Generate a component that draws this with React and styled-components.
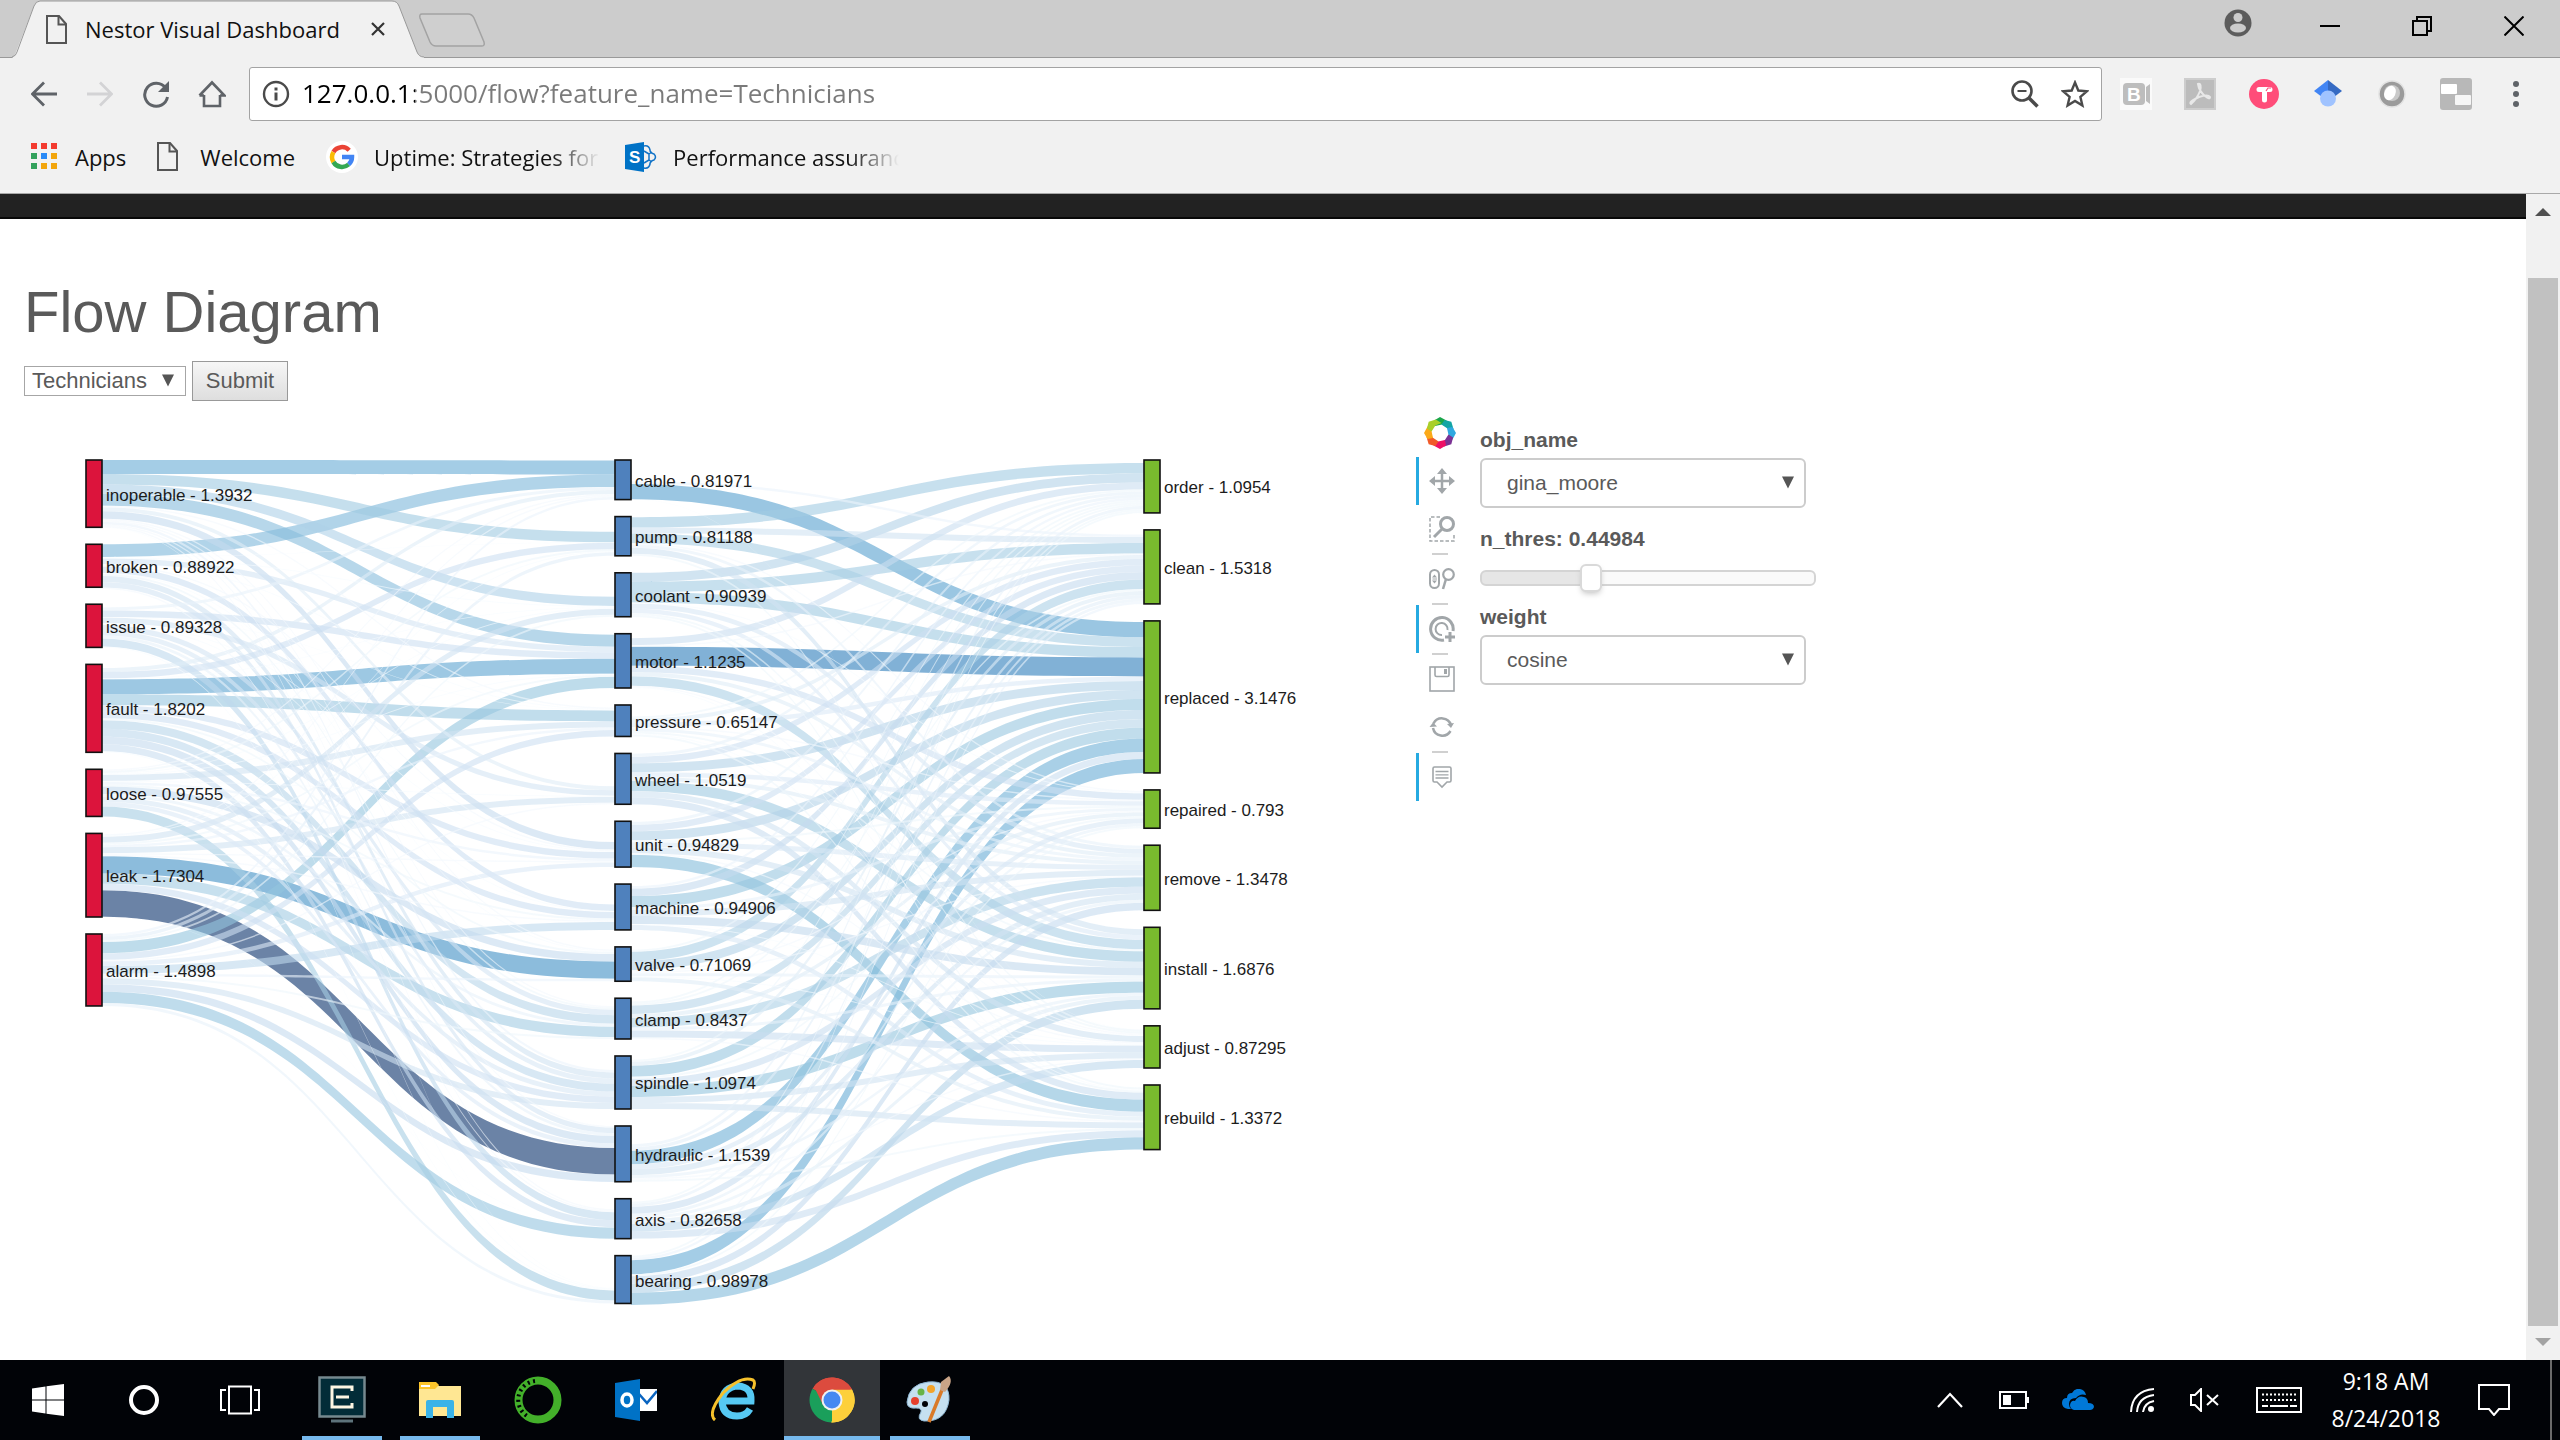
import React, { useState } from "react";
import styled, { createGlobalStyle, css } from "styled-components";

const UI = `"Open Sans", "Noto Sans", sans-serif`;
const ARIAL = `"Liberation Sans", Arial, sans-serif`;

const GlobalStyle = createGlobalStyle`
  *, *::before, *::after { box-sizing: border-box; }
  html, body, #root { height: 100%; }
  body { margin: 0; background: #fff; font-family: ${ARIAL}; }
  button { border: 0; padding: 0; background: none; color: inherit; font: inherit; }
  svg { display: block; flex: none; }
`;

/* ---------- frame ---------- */

const Screen = styled.div`
  display: flex;
  flex-direction: column;
  height: 100vh;
  overflow: hidden;
`;

const TabStrip = styled.header`
  display: flex;
  justify-content: space-between;
  height: 58px;
  padding-left: 12px;
  background: #ccc;
  box-shadow: inset 0 -1px #999;
`;

const Tabs = styled.div`
  display: flex;
`;

const Tab = styled.div`
  position: relative;
  display: flex;
  align-items: center;
  width: 412px;
  height: 58px;
  padding: 0 36px 0 34px;
`;

const TabShape = styled.svg`
  position: absolute;
  inset: 0;
`;

const TabTitle = styled.span`
  position: relative;
  flex: 1;
  margin-left: 18px;
  color: #111;
  font: 22px/32px ${UI};
  white-space: nowrap;
`;

const Layer = styled.span`
  position: relative;
  display: flex;
`;

const TabClose = styled.button`
  position: relative;
  display: grid;
  place-items: center;
  width: 20px;
  height: 20px;
`;

const NewTab = styled.button`
  display: flex;
  align-items: flex-start;
  margin-left: -6px;
  padding-top: 13px;
`;

const WindowButtons = styled.div`
  display: flex;
  height: 52px;
`;

const WindowButton = styled.button`
  display: grid;
  place-items: center;
  width: 92px;
`;

const ToolbarRow = styled.nav`
  display: flex;
  align-items: center;
  height: 72px;
  padding: 0 24px 0 16px;
  background: #f1f1f1;
`;

const NavButton = styled.button`
  display: grid;
  place-items: center;
  width: 56px;
  height: 44px;
`;

const AddressBar = styled.div`
  flex: 1;
  display: flex;
  align-items: center;
  gap: 22px;
  height: 54px;
  margin: 0 18px 0 9px;
  padding: 0 12px;
  border: 1px solid #a3a3a3;
  border-radius: 3px;
  background: #fff;
`;

const Address = styled.input`
  flex: 1;
  min-width: 0;
  height: 44px;
  margin-left: -10px;
  padding: 0 0 2px;
  border: 0;
  outline: 0;
  font: 26px/42px ${UI};
  -webkit-text-fill-color: transparent;
  background: linear-gradient(90deg, #000 113px, #7a7a7a 113px);
  background-clip: text;
  -webkit-background-clip: text;
`;

const Extensions = styled.div`
  display: flex;
  gap: 32px;
`;

const IconButton = styled.button`
  display: grid;
  place-items: center;
  width: ${(p) => p.$size || 32}px;
  height: 32px;
`;

const Bookmarks = styled.nav`
  display: flex;
  align-items: center;
  height: 64px;
  padding: 0 31px 10px;
  gap: 31px;
  background: #f1f1f1;
  border-bottom: 1px solid #a9a9a9;
`;

const Bookmark = styled.a`
  display: flex;
  align-items: center;
  gap: ${(p) => p.$gap || 18}px;
  color: #111;
  font: 22px/34px ${UI};
  text-decoration: none;
  white-space: nowrap;
`;

const FadeBox = styled.span`
  width: 220px;
`;

const FadeText = styled.span`
  display: block;
  width: max-content;
  mask-image: linear-gradient(90deg, #000 176px, transparent 226px);
`;

/* ---------- page ---------- */

const Viewport = styled.div`
  flex: 1;
  min-height: 0;
  display: flex;
`;

const Page = styled.main`
  flex: 1;
  min-width: 0;
  overflow: hidden;
  color: #5a5a5a;
`;

const DarkBar = styled.div`
  height: 25px;
  background: #222;
  border-bottom: 2px solid #080808;
`;

const Heading = styled.h1`
  margin: 60px 24px 16px;
  font: 400 58px/66px ${ARIAL};
`;

const FeatureForm = styled.form`
  display: flex;
  align-items: center;
  gap: 6px;
  height: 40px;
  margin: 0 24px;
`;

const SelectBox = styled.div`
  position: relative;
  width: ${(p) => p.$width}px;
`;

const Arrow = styled.svg`
  position: absolute;
  right: 12px;
  top: 50%;
  margin-top: -7px;
  pointer-events: none;
`;

const SmallSelect = styled.select`
  display: block;
  appearance: none;
  width: 100%;
  height: 30px;
  padding: 0 7px;
  border: 1px solid #a6a6a6;
  border-radius: 0;
  background: #fff;
  color: #5a5a5a;
  font: 22px/28px ${ARIAL};
`;

const Submit = styled.button`
  width: 96px;
  height: 40px;
  border: 1px solid #999;
  background: linear-gradient(#f6f6f6, #dedede);
  font-size: 22px;
`;

const Plot = styled.section`
  display: flex;
  align-items: flex-start;
  padding-top: 15px;
`;

const ToolColumn = styled.div`
  display: flex;
  flex-direction: column;
  width: 42px;
  margin-left: 16px;
`;

const ToolLogo = styled.a`
  display: flex;
  margin: 1px 0 8px 8px;
`;

const Tool = styled.button`
  display: grid;
  place-items: center;
  height: 48px;
  padding-left: 6px;
  border-left: 3px solid ${(p) => (p.$active ? "#26aae1" : "transparent")};
`;

const ToolGap = styled.hr`
  width: 16px;
  height: 2px;
  margin: 0 0 0 16px;
  border: 0;
  background: #d0d0d0;
`;

const Widgets = styled.form`
  display: flex;
  flex-direction: column;
  width: 336px;
  margin-left: 22px;
  padding-top: 11px;
`;

const WidgetBlock = styled.div`
  display: flex;
  flex-direction: column;
  gap: ${(p) => p.$gap}px;
  margin-bottom: ${(p) => p.$after}px;
`;

const WidgetLabel = styled.label`
  font: 700 21px/26px ${ARIAL};
`;

const WideSelect = styled.select`
  display: block;
  appearance: none;
  width: 100%;
  height: 50px;
  padding: 0 25px;
  border: 2px solid #ccc;
  border-radius: 6px;
  background: #fff;
  color: #5a5a5a;
  font: 21px/44px ${ARIAL};
`;

const Slider = styled.input`
  appearance: none;
  width: 100%;
  height: 28px;
  margin: 0;
  background: transparent;
  &::-webkit-slider-runnable-track {
    height: 16px;
    border: 2px solid #d4d4d4;
    border-radius: 6px;
    background: linear-gradient(90deg, #e6e6e6 33%, #fafafa 33%);
  }
  &::-webkit-slider-thumb {
    appearance: none;
    width: 22px;
    height: 28px;
    margin-top: -8px;
    border: 2px solid #d9d9d9;
    border-radius: 6px;
    background: #fff;
    box-shadow: 0 3px 6px -2px #bbb;
  }
`;

const ScrollTrack = styled.div`
  display: flex;
  flex-direction: column;
  align-items: center;
  width: 34px;
  padding: 14px 0;
  background: #f1f1f1;
`;

const ScrollThumb = styled.div`
  flex: 1;
  width: 30px;
  margin: 62px 0 12px;
  background: #c1c1c1;
`;

/* ---------- taskbar ---------- */

const Taskbar = styled.footer`
  display: flex;
  justify-content: space-between;
  height: 80px;
  background: #010307;
  color: #fff;
`;

const TaskGroup = styled.div`
  display: flex;
  gap: ${(p) => p.$gap || 0}px;
  margin-left: ${(p) => (p.$gap ? 6 : 0)}px;
`;

const TaskButton = styled.button`
  position: relative;
  display: grid;
  place-items: center;
  width: 96px;
  height: 80px;
  background: ${(p) => (p.$active ? "#323539" : "transparent")};
  ${(p) =>
    p.$open &&
    css`
      &::after {
        content: "";
        position: absolute;
        bottom: 0;
        left: ${p.$active ? 0 : 8}px;
        right: ${p.$active ? 0 : 8}px;
        height: 4px;
        background: #76b9ed;
      }
    `}
`;

const Tray = styled.div`
  display: flex;
  align-items: center;
  padding-right: 8px;
`;

const TrayButton = styled.button`
  display: grid;
  place-items: center;
  width: ${(p) => p.$w || 64}px;
  height: 80px;
`;

const Clock = styled.time`
  width: 124px;
  font: 23px/37px ${UI};
  text-align: center;
`;

const ShowDesktop = styled.button`
  width: 2px;
  height: 80px;
  margin-left: 10px;
  background: #6a6a6a;
`;

/* ---------- flow diagram ---------- */

const K = 48.3;
const PAD = 17;
const TOP = 44;
const NODE_W = 16;

const columns = [
  {
    x: 86,
    color: "#dc143c",
    nodes: [["inoperable", 1.3932], ["broken", 0.88922], ["issue", 0.89328], ["fault", 1.8202], ["loose", 0.97555], ["leak", 1.7304], ["alarm", 1.4898]],
  },
  {
    x: 615,
    color: "#4f81bd",
    nodes: [["cable", 0.81971], ["pump", 0.81188], ["coolant", 0.90939], ["motor", 1.1235], ["pressure", 0.65147], ["wheel", 1.0519], ["unit", 0.94829], ["machine", 0.94906], ["valve", 0.71069], ["clamp", 0.8437], ["spindle", 1.0974], ["hydraulic", 1.1539], ["axis", 0.82658], ["bearing", 0.98978]],
  },
  {
    x: 1144,
    color: "#79bb2e",
    nodes: [["order", 1.0954], ["clean", 1.5318], ["replaced", 3.1476], ["repaired", 0.793], ["remove", 1.3478], ["install", 1.6876], ["adjust", 0.87295], ["rebuild", 1.3372]],
  },
];

/* problem -> item, one row for each problem */
const problemItem = [
  [14, 10.5, 9.3, 12, 1.5, 4, 7.5, 0, 1.5, 1.5, 2.5, 1.5, 1.5, 0.5],
  [12.6, 0.5, 1, 5.5, 1, 0, 1.5, 6.5, 1, 2, 6, 5.5, 1.5, 0],
  [3, 0, 0, 6.5, 0.5, 5.5, 1, 1, 0, 5.5, 5, 3, 8, 1],
  [4, 6.5, 0.8, 15, 11, 0, 6.5, 6.5, 2, 8.5, 8, 7.5, 7, 1],
  [1.5, 2, 1, 1, 6, 1, 2.5, 2, 7.5, 3, 5, 4.5, 0, 10],
  [1.5, 1, 6, 2, 2.5, 6, 1.5, 1.5, 17.2, 10.3, 6.5, 26.5, 0.3, 0],
  [2.5, 3.5, 2, 11.3, 6.5, 1.5, 4.5, 8, 2.5, 2, 6, 7.5, 11.2, 3],
];

/* item -> solution, one row for each item */
const itemSolution = [
  [0, 2.5, 15.3, 0, 0, 0, 0.3, 0],
  [10.3, 6, 9.7, 1.5, 3, 6, 2, 0],
  [9, 10.3, 10.5, 1, 5, 4.5, 2, 2],
  [7, 1.5, 19, 6.5, 4, 9.5, 1.3, 1],
  [2, 4, 4.5, 1.5, 3, 2, 1, 2],
  [3, 6.5, 9, 4.5, 4, 10.5, 6, 7],
  [3, 6.5, 9, 2, 5, 6, 1.5, 12.2],
  [2.5, 7.5, 11, 3, 6, 7.8, 1, 5],
  [2, 9.5, 9, 1.5, 1.5, 3, 1, 4],
  [2, 2, 8.5, 4, 9.5, 3, 7, 1.5],
  [2, 4, 11, 2, 7, 11.3, 6, 6],
  [3, 3.5, 13.5, 5, 6, 3, 1.5, 2],
  [2, 3, 7, 3, 3, 4, 8, 7],
  [2, 2.5, 14, 2, 7.5, 9, 0, 12.3],
];

const blues = [[247, 251, 255], [222, 235, 247], [198, 219, 239], [158, 202, 225], [107, 174, 214], [66, 146, 198], [33, 113, 181], [8, 81, 156], [8, 48, 107]];

function blue(t) {
  const p = Math.min(0.9999, Math.max(0, t)) * (blues.length - 1);
  const i = Math.floor(p);
  const mix = blues[i].map((c, n) => Math.round(c + (blues[i + 1][n] - c) * (p - i)));
  return `rgb(${mix.join(",")})`;
}

const placed = columns.map((col) => {
  let y = TOP;
  return col.nodes.map(([name, value]) => {
    const node = { name, value, y, h: value * K };
    y += node.h + PAD;
    return node;
  });
});

function buildLinks(table, from, to, x0, x1) {
  const total = (list) => list.reduce((a, b) => a + b, 0);
  const outY = from.map((n, i) => n.y + n.h - Math.min(n.h, total(table[i])));
  const inY = to.map((n, j) => n.y + n.h - Math.min(n.h, total(table.map((r) => r[j]))));
  const links = [];
  table.forEach((row, i) =>
    row.forEach((w, j) => {
      if (!w) return;
      links.push({ w, x0, x1, y0: outY[i], y1: inY[j], key: from[i].name + to[j].name });
      outY[i] += w;
      inY[j] += w;
    })
  );
  return links;
}

const links = [
  ...buildLinks(problemItem, placed[0], placed[1], columns[0].x + NODE_W, columns[1].x),
  ...buildLinks(itemSolution, placed[1], placed[2], columns[1].x + NODE_W, columns[2].x),
].sort((a, b) => b.w - a.w);

function band({ x0, x1, y0, y1, w }) {
  const m = (x0 + x1) / 2;
  return `M${x0} ${y0}C${m} ${y0} ${m} ${y1} ${x1} ${y1}V${y1 + w}C${m} ${y1 + w} ${m} ${y0 + w} ${x0} ${y0 + w}Z`;
}

const NodeLabel = styled.text`
  font: 17px ${ARIAL};
  fill: #1c1c1c;
`;

function FlowDiagram() {
  return (
    <svg width="1400" height="900" viewBox="0 0 1400 900" role="img" aria-label="Flow diagram">
      {links.map((l) => (
        <path key={l.key} d={band(l)} fill={blue((l.w - 1) / 25.5)} fillOpacity="0.6" />
      ))}
      {columns.map((col, c) =>
        placed[c].map((n) => (
          <g key={n.name}>
            <rect x={col.x} y={n.y} width={NODE_W} height={n.h} fill={col.color} stroke="#111" strokeWidth="1.6" />
            <NodeLabel x={col.x + 20} y={n.y + n.h / 2 + 7}>{`${n.name} - ${n.value}`}</NodeLabel>
          </g>
        ))
      )}
    </svg>
  );
}

/* ---------- icons ---------- */

const FileIcon = () => (
  <svg width="21" height="29" viewBox="0 0 21 29" fill="none" stroke="#555" strokeWidth="2">
    <path d="M1 1h12l7 8v19H1z" /><path d="M12.500 1v8.500H20" />
  </svg>
);

const Triangle = () => (
  <Arrow width="12" height="13" viewBox="0 0 12 13"><path d="M0 0.500h12L6 12.500z" fill="#555" /></Arrow>
);

const BackIcon = ({ flip }) => (
  <svg width="26" height="26" viewBox="0 0 26 26" fill="none" stroke={flip ? "#d3d3d5" : "#5f6368"} strokeWidth="2.800">
    <path d={flip ? "M0 13h24M13 1.500L24.500 13 13 24.500" : "M26 13H2M13 1.500L1.500 13 13 24.500"} />
  </svg>
);

const AppsIcon = () => (
  <svg width="26" height="27" viewBox="0 0 26 27">
    {["#f33b30", "#f33b30", "#f33b30", "#33a15c", "#2a8af6", "#f2a50c", "#33a15c", "#f2a50c", "#f2a50c"].map((c, i) => (
      <rect key={i} x={(i % 3) * 10} y={Math.floor(i / 3) * 10} width="6" height="6" fill={c} />
    ))}
  </svg>
);

const GoogleIcon = () => (
  <svg width="32" height="32" viewBox="0 0 32 32">
    <circle cx="16" cy="16" r="16" fill="#fff" />
    <g fill="none" strokeWidth="4.500">
      <path d="M23.200 9.200A10 10 0 0 0 7.400 11" stroke="#ea4335" />
      <path d="M7.400 11a10 10 0 0 0 0 10" stroke="#fbbc05" />
      <path d="M7.400 21a10 10 0 0 0 15.300 2.400" stroke="#34a853" />
      <path d="M22.700 23.400A10 10 0 0 0 26 16H16" stroke="#4285f4" />
    </g>
  </svg>
);

const SharePointIcon = () => (
  <svg width="32" height="30" viewBox="0 0 32 30">
    <g fill="none" stroke="#1173c7" strokeWidth="1.500"><path d="M19 4q5-1 6 4 0 3 4 4 3 3 0 6-4 1-4 4-1 5-6 4" /><path d="M19 9l5 3v6l-5 3M24 12l3-2M24 18l3 2" /></g>
    <path d="M0 3L19 0v30L0 27z" fill="#0072c6" />
    <text x="4" y="21" fill="#fff" fontFamily="Liberation Sans, sans-serif" fontWeight="700" fontSize="17">S</text>
  </svg>
);

const BokehLogo = () => {
  const colors = ["#1aa64b", "#12a5a5", "#2fa8e0", "#7b3294", "#ee1066", "#f15a29", "#fba919", "#a9cf2a"];
  return (
    <svg width="32" height="32" viewBox="-16 -16 32 32">
      {colors.map((c, i) => (
        <path key={c} d="M-6 -12.500L0 -16L6.500 -12.500L8 -6L2 -8.500L-5 -7Z" fill={c} transform={`rotate(${i * 45})`} />
      ))}
    </svg>
  );
};

const G = "#a1a6a9";
const ToolIcon = ({ children }) => <svg width="26" height="26" viewBox="0 0 26 26" fill="none" stroke={G} strokeWidth="2">{children}</svg>;

const PanIcon = () => (
  <ToolIcon>
    <path d="M13 3v20M3 13h20" strokeWidth="2.500" />
    <path d="M13 0l5 6H8zM13 26l5-6H8zM0 13l6-5v10zM26 13l-6-5v10z" fill={G} stroke="none" />
  </ToolIcon>
);
const BoxZoomIcon = () => (
  <ToolIcon>
    <path d="M11 1H1v24h24v-8" strokeDasharray="3.500 2" strokeWidth="1.500" />
    <circle cx="18" cy="8" r="6.500" strokeWidth="3" /><path d="M13 13l-8 8" strokeWidth="3" />
  </ToolIcon>
);
const WheelIcon = () => (
  <ToolIcon>
    <rect x="1" y="4" width="9" height="18" rx="4.500" /><path d="M3.500 13h4.500" strokeWidth="1" />
    <path d="M3 11.500l2.500-3 2.500 3zM3 14.500l2.500 3 2.500-3z" fill={G} stroke="none" />
    <circle cx="19.500" cy="8.500" r="5.300" strokeWidth="2.200" /><path d="M17 13l-3 10" strokeWidth="2.500" />
  </ToolIcon>
);
const TapIcon = () => (
  <ToolIcon>
    <path d="M24 15A11.300 11.300 0 1 0 15 24" strokeWidth="3" />
    <path d="M18.500 14A6 6 0 1 0 13 19" strokeWidth="2" />
    <path d="M21 16v10M16 21h10" strokeWidth="3" />
  </ToolIcon>
);
const SaveIcon = () => (
  <ToolIcon>
    <rect x="1" y="1" width="24" height="24" strokeWidth="1.600" /><path d="M6 1v8q0 1.500 1.500 1.500h11q1.500 0 1.500-1.500V1" strokeWidth="1.600" />
    <rect x="15" y="3" width="3" height="5" fill={G} stroke="none" />
  </ToolIcon>
);
const ResetIcon = () => (
  <ToolIcon>
    <path d="M4.500 9.500A9.500 9.500 0 0 1 22 11M21.500 17A9.500 9.500 0 0 1 4 14" strokeWidth="2.500" />
    <path d="M25 9l-3 5-4-4zM0.500 13L4 8.500l4 4z" fill={G} stroke="none" />
  </ToolIcon>
);
const HoverIcon = () => (
  <ToolIcon>
    <path d="M5.500 3h15q1.500 0 1.500 1.500v12q0 1.500-1.500 1.500H18l-5 5-5-5H5.500Q4 18 4 16.500v-12Q4 3 5.500 3z" strokeWidth="1.600" />
    <path d="M6.500 7.500h13M6.500 10.800h13M6.500 14h13" strokeWidth="1.300" />
  </ToolIcon>
);

const ChromeIcon = () => (
  <svg width="46" height="46" viewBox="-23 -23 46 46">
    <path d="M0 0L-19.500 -11.200A22.500 22.500 0 0 1 19.500 -11.200Z" fill="#dc4b3e" />
    <path d="M0 0L19.500 -11.200A22.500 22.500 0 0 1 0 22.500Z" fill="#fdd03b" />
    <path d="M0 0L0 22.500A22.500 22.500 0 0 1 -19.500 -11.200Z" fill="#1a9f5b" />
    <path d="M0 -10.500H20A22.500 22.500 0 0 1 -1 22.500L9 5Z" fill="#fdd03b" />
    <path d="M0 -10.500H20A22.500 22.500 0 0 0 -18 -13.500L-9 5Z" fill="#dc4b3e" />
    <circle r="10.500" fill="#f1f1f1" /><circle r="8.500" fill="#4688f1" />
  </svg>
);

/* ---------- app ---------- */

export default function App() {
  const [threshold, setThreshold] = useState(0.315);
  return (
    <Screen>
      <GlobalStyle />
      <TabStrip>
        <Tabs>
          <Tab>
            <TabShape width="412" height="58" viewBox="0 0 412 58">
              <path d="M0 58Q3 56 4 52L22 6Q24 1 28 1H380Q385 1 387 6L405 52Q407 57 412 57V58Z" fill="#f1f1f1" />
              <path d="M0 57Q4 56 5 52L22 6Q24 1 28 1H380Q385 1 387 6L405 52Q407 57 412 57" fill="none" stroke="#999" />
            </TabShape>
            <Layer><FileIcon /></Layer>
            <TabTitle>Nestor Visual Dashboard</TabTitle>
            <TabClose aria-label="Close tab">
              <svg width="14" height="14" viewBox="0 0 14 14" stroke="#333" strokeWidth="2.200"><path d="M1 1l12 12M13 1L1 13" /></svg>
            </TabClose>
          </Tab>
          <NewTab aria-label="New tab">
            <svg width="68" height="36" viewBox="0 0 68 36"><path d="M4 1H50Q54 1 56 5L66 29Q67 33 64 33H18Q14 33 12 29L2 5Q1 1 4 1Z" fill="#cfcfcf" stroke="#a3a3a3" strokeWidth="1.500" /></svg>
          </NewTab>
        </Tabs>
        <WindowButtons>
          <WindowButton aria-label="Profile">
            <svg width="28" height="46" viewBox="0 0 28 46"><circle cx="14" cy="20" r="13.500" fill="#5c5c5c" /><circle cx="14" cy="14.500" r="4.500" fill="#ccc" /><ellipse cx="14" cy="25" rx="8" ry="4.500" fill="#ccc" /></svg>
          </WindowButton>
          <WindowButton aria-label="Minimise"><svg width="20" height="20" viewBox="0 0 20 20"><path d="M0 10h20" stroke="#000" strokeWidth="2" /></svg></WindowButton>
          <WindowButton aria-label="Restore">
            <svg width="20" height="20" viewBox="0 0 20 20" fill="none" stroke="#000" strokeWidth="2"><path d="M1 5h14v14H1zM5 5V1h14v14h-4" /></svg>
          </WindowButton>
          <WindowButton aria-label="Close"><svg width="20" height="20" viewBox="0 0 20 20" stroke="#000" strokeWidth="2"><path d="M0.500 0.500l19 19M19.500 0.500l-19 19" /></svg></WindowButton>
        </WindowButtons>
      </TabStrip>

      <ToolbarRow>
        <NavButton aria-label="Back"><BackIcon /></NavButton>
        <NavButton aria-label="Forward"><BackIcon flip /></NavButton>
        <NavButton aria-label="Reload">
          <svg width="28" height="28" viewBox="0 0 28 28" fill="none" stroke="#5f6368" strokeWidth="3"><path d="M23.500 8A11.500 11.500 0 1 0 25.500 17" /><path d="M27 1v11H16z" fill="#5f6368" stroke="none" /></svg>
        </NavButton>
        <NavButton aria-label="Home">
          <svg width="28" height="28" viewBox="0 0 28 28" fill="none" stroke="#5f6368" strokeWidth="2.600"><path d="M6 15v11h16V15M1.500 15.500L14 2.500l12.500 13H22M6 15.500H1.500" /></svg>
        </NavButton>
        <AddressBar>
          <svg width="28" height="28" viewBox="0 0 28 28" fill="none" stroke="#4a4a4a" strokeWidth="2.400"><circle cx="14" cy="14" r="12" /><path d="M14 12.500v8" strokeWidth="3" /><path d="M14 7.500v3" strokeWidth="3" /></svg>
          <Address aria-label="Address" defaultValue="127.0.0.1:5000/flow?feature_name=Technicians" spellCheck={false} />
          <IconButton $size={28} aria-label="Zoom">
            <svg width="28" height="28" viewBox="0 0 28 28" fill="none" stroke="#4a4a4a" strokeWidth="2.600"><circle cx="11" cy="11" r="9.500" /><path d="M18 18l8.500 8.500" strokeWidth="3.600" /><path d="M6.500 11h9" strokeWidth="2" /></svg>
          </IconButton>
          <IconButton $size={28} aria-label="Bookmark this page">
            <svg width="28" height="28" viewBox="0 0 28 28" fill="none" stroke="#4a4a4a" strokeWidth="2.400"><path d="M14 2.500l3.300 8 8.700.700-6.600 5.700 2 8.600-7.400-4.600-7.400 4.600 2-8.600L2 11.200l8.700-.700z" /></svg>
          </IconButton>
        </AddressBar>
        <Extensions>
          <IconButton aria-label="Meeting extension">
            <svg width="32" height="32" viewBox="0 0 32 32"><path fill="#fafafa" d="M0 0h32v32H0z" /><rect x="3" y="5" width="22" height="22" rx="4" fill="#bdbdbd" /><path d="M26 9l4-3v20l-4-3z" fill="#bdbdbd" /><text x="7" y="23" fontSize="19" fontWeight="700" fill="#fff" fontFamily="Liberation Sans, sans-serif">B</text></svg>
          </IconButton>
          <IconButton aria-label="PDF extension">
            <svg width="32" height="32" viewBox="0 0 32 32"><rect x="1" y="1" width="30" height="30" fill="#bcbcbc" stroke="#cdcdcd" strokeWidth="2" /><path d="M14 6q4-1 2 7-3 8-9 13-3-2 8-7 9-3 11 0 0 3-5-1-6-5-7-12z" fill="none" stroke="#e8e8e8" strokeWidth="2" /></svg>
          </IconButton>
          <IconButton aria-label="Typing extension">
            <svg width="32" height="32" viewBox="0 0 32 32"><circle cx="16" cy="16" r="15" fill="#ff4d79" /><path d="M11 11.500h11M16.500 12v10" stroke="#fff" strokeWidth="5" strokeLinecap="round" /><path d="M18 13l2-3h3" stroke="#ff4d79" strokeWidth="1.200" fill="none" /></svg>
          </IconButton>
          <IconButton aria-label="Scholar extension">
            <svg width="32" height="32" viewBox="0 0 32 32"><path d="M16 2L2 13l8 6h6z" fill="#4285f4" /><path d="M16 2l14 11-8 6h-6z" fill="#356ac3" /><circle cx="16" cy="20.500" r="8" fill="#a0c3ff" /></svg>
          </IconButton>
          <IconButton aria-label="Ring extension">
            <svg width="32" height="32" viewBox="0 0 32 32"><circle cx="16" cy="16" r="13" fill="#9b9b9b" stroke="#e2e2e2" strokeWidth="1.500" /><circle cx="16" cy="15" r="8" fill="#c9c9c9" /><ellipse cx="14" cy="15" rx="5.500" ry="7.500" fill="#fff" transform="rotate(25 14 15)" /></svg>
          </IconButton>
          <IconButton aria-label="Window extension">
            <svg width="32" height="32" viewBox="0 0 32 32"><rect width="32" height="32" rx="3" fill="#b8b8b8" /><rect x="1" y="6" width="16" height="10" rx="1" fill="#fff" /><rect x="15" y="17" width="16" height="10" rx="1" fill="#f6f6f6" /></svg>
          </IconButton>
          <IconButton aria-label="Menu">
            <svg width="32" height="32" viewBox="0 0 32 32" fill="#5f6368"><circle cx="12" cy="6" r="3" /><circle cx="12" cy="16" r="3" /><circle cx="12" cy="26" r="3" /></svg>
          </IconButton>
        </Extensions>
      </ToolbarRow>

      <Bookmarks>
        <Bookmark href="#apps"><AppsIcon />Apps</Bookmark>
        <Bookmark href="#welcome" $gap={22}><FileIcon />Welcome</Bookmark>
        <Bookmark href="#uptime" $gap={16}><GoogleIcon /><FadeBox><FadeText>Uptime: Strategies for</FadeText></FadeBox></Bookmark>
        <Bookmark href="#assurance" $gap={16}><SharePointIcon /><FadeBox><FadeText>Performance assurance</FadeText></FadeBox></Bookmark>
      </Bookmarks>

      <Viewport>
        <Page>
          <DarkBar />
          <Heading>Flow Diagram</Heading>
          <FeatureForm onSubmit={(e) => e.preventDefault()}>
            <SelectBox $width={162}>
              <SmallSelect aria-label="Feature name" defaultValue="Technicians"><option>Technicians</option></SmallSelect>
              <Triangle />
            </SelectBox>
            <Submit type="submit">Submit</Submit>
          </FeatureForm>
          <Plot>
            <FlowDiagram />
            <ToolColumn>
              <ToolLogo href="#bokeh" aria-label="Bokeh"><BokehLogo /></ToolLogo>
              <Tool $active aria-label="Pan"><PanIcon /></Tool>
              <Tool aria-label="Box zoom"><BoxZoomIcon /></Tool>
              <ToolGap />
              <Tool aria-label="Wheel zoom"><WheelIcon /></Tool>
              <ToolGap />
              <Tool $active aria-label="Tap"><TapIcon /></Tool>
              <ToolGap />
              <Tool aria-label="Save"><SaveIcon /></Tool>
              <Tool aria-label="Reset"><ResetIcon /></Tool>
              <ToolGap />
              <Tool $active aria-label="Hover"><HoverIcon /></Tool>
            </ToolColumn>
            <Widgets>
              <WidgetBlock $gap={5} $after={18}>
                <WidgetLabel htmlFor="obj">obj_name</WidgetLabel>
                <SelectBox $width={326}>
                  <WideSelect id="obj" defaultValue="gina_moore"><option>gina_moore</option></WideSelect>
                  <Triangle />
                </SelectBox>
              </WidgetBlock>
              <WidgetBlock $gap={12} $after={12}>
                <WidgetLabel htmlFor="thres">n_thres: 0.44984</WidgetLabel>
                <Slider id="thres" type="range" min="0" max="1" step="0.001" value={threshold} onChange={(e) => setThreshold(+e.target.value)} />
              </WidgetBlock>
              <WidgetBlock $gap={5} $after={0}>
                <WidgetLabel htmlFor="weight">weight</WidgetLabel>
                <SelectBox $width={326}>
                  <WideSelect id="weight" defaultValue="cosine"><option>cosine</option></WideSelect>
                  <Triangle />
                </SelectBox>
              </WidgetBlock>
            </Widgets>
          </Plot>
        </Page>
        <ScrollTrack>
          <svg width="16" height="8" viewBox="0 0 16 8"><path d="M0 8L8 0l8 8z" fill="#505050" /></svg>
          <ScrollThumb />
          <svg width="16" height="8" viewBox="0 0 16 8"><path d="M0 0L8 8l8-8z" fill="#a3a3a3" /></svg>
        </ScrollTrack>
      </Viewport>

      <Taskbar>
        <TaskGroup>
          <TaskGroup>
            <TaskButton aria-label="Start"><svg width="32" height="32" viewBox="0 0 32 32" fill="#fff"><path d="M0 4.500l13.500-2V15.500H0zM14.500 2.300L32 0v15.500H14.500zM0 16.500h13.500v13L0 27.500zM14.500 16.500H32V32l-17.500-2.300z" /></svg></TaskButton>
            <TaskButton aria-label="Search"><svg width="32" height="32" viewBox="0 0 32 32"><circle cx="16" cy="16" r="13" fill="none" stroke="#fff" strokeWidth="4" /></svg></TaskButton>
            <TaskButton aria-label="Task view"><svg width="40" height="30" viewBox="0 0 40 30" fill="none" stroke="#fff" strokeWidth="2"><path d="M9 1.500h22v27H9zM6 5H1v20h5M34 5h5v20h-5" /></svg></TaskButton>
          </TaskGroup>
          <TaskGroup $gap={2}>
            <TaskButton $open aria-label="Editor"><svg width="48" height="48" viewBox="0 0 48 48"><rect x="1.500" y="1.500" width="45" height="39" fill="#022c38" stroke="#76898f" strokeWidth="2.500" /><path d="M34 15v-4H14v20h20v-4M18 21h13" fill="none" stroke="#fdf6e3" strokeWidth="3" /><path d="M13 45h22" stroke="#5d737b" strokeWidth="3" /></svg></TaskButton>
            <TaskButton $open aria-label="File Explorer"><svg width="42" height="36" viewBox="0 0 42 36"><path d="M0 1h17l3 3h22v30H0z" fill="#ffe793" /><path d="M0 0h17l3 3-4 4H0z" fill="#fdc52a" /><path d="M2 3h9v2H2z" fill="#fff" /><path d="M7 36V20q0-2 2-2h24q2 0 2 2v16h-7V25H14v11z" fill="#3bb3e8" /></svg></TaskButton>
            <TaskButton aria-label="Anaconda"><svg width="50" height="50" viewBox="0 0 50 50" fill="none"><circle cx="25" cy="25" r="19.500" stroke="#43b02a" strokeWidth="8" /><path d="M22 6A19 19 0 0 0 16 42" stroke="#010307" strokeWidth="4" strokeDasharray="2 3.500" /></svg></TaskButton>
            <TaskButton aria-label="Outlook"><svg width="42" height="42" viewBox="0 0 42 42"><path d="M22 10h20v22H22z" fill="#fff" /><path d="M24 15l8 9 10-12" fill="none" stroke="#0a64c0" strokeWidth="2.500" /><path d="M0 4l25-4v42L0 38z" fill="#0072c6" /><ellipse cx="12" cy="21" rx="5" ry="6" fill="none" stroke="#fff" strokeWidth="3.500" /></svg></TaskButton>
            <TaskButton aria-label="Internet Explorer"><svg width="46" height="46" viewBox="0 0 46 46" fill="none"><path d="M11 24h29q1-14-13-15Q12 10 11 25q1 14 15 14 9 0 13-7" stroke="#56c9f3" strokeWidth="7" /><path d="M4 43Q-4 36 12 16 30-2 42 3q3 2 0 9" stroke="#f6c12b" strokeWidth="3" /></svg></TaskButton>
            <TaskButton $open $active aria-label="Chrome"><ChromeIcon /></TaskButton>
            <TaskButton $open aria-label="Paint"><svg width="48" height="48" viewBox="0 0 48 48"><path d="M22 6Q44 4 43 24 40 46 18 45 10 44 15 36q1-4-5-4-9 1-9-6Q3 8 22 6z" fill="#c5e0f0" stroke="#8fb7d3" /><circle cx="9" cy="25" r="4" fill="#e5402d" /><circle cx="15" cy="16" r="3.500" fill="#67b346" /><circle cx="25" cy="13" r="4" fill="#f2a32a" /><circle cx="19" cy="28" r="3" fill="#010307" /><path d="M23 46L36 14" stroke="#d97a28" strokeWidth="3.500" /><path d="M34 14l1-8 8-6q5 6-4 16z" fill="#c9a487" /></svg></TaskButton>
          </TaskGroup>
        </TaskGroup>
        <Tray>
          <TrayButton aria-label="Hidden icons"><svg width="26" height="16" viewBox="0 0 26 16" fill="none" stroke="#fff" strokeWidth="2.200"><path d="M1 15L13 2l12 13" /></svg></TrayButton>
          <TrayButton aria-label="Battery"><svg width="30" height="18" viewBox="0 0 30 18"><path d="M1 1h26v16H1z" fill="none" stroke="#fff" strokeWidth="2" /><path d="M4 4h8v10H4zM28 6h2v6h-2z" fill="#fff" /></svg></TrayButton>
          <TrayButton aria-label="OneDrive"><svg width="32" height="22" viewBox="0 0 32 22" fill="#0078d7"><path d="M6 20Q0 19 0 14q0-5 5-5 0-5 5-5 3-5 8-4 5 1 6 6-6-2-10 3-7 0-7 6 0 3 2 5z" /><path d="M12 21q-4-1-4-5 1-5 5-4 3-6 9-4 4 1 4 6 6 0 6 4-1 3-4 3z" /></svg></TrayButton>
          <TrayButton aria-label="Network"><svg width="26" height="26" viewBox="0 0 26 26" fill="none" stroke="#fff" strokeWidth="2"><path d="M2 25Q3 4 25 2M8 25Q9 10 25 8M14 25q1-9 11-11" /><circle cx="22" cy="22" r="3" fill="#fff" stroke="none" /></svg></TrayButton>
          <TrayButton $w={60} aria-label="Volume"><svg width="29" height="24" viewBox="0 0 29 24" fill="none" stroke="#fff" strokeWidth="2"><path d="M1 7h4l6-6v22l-6-6H1zM17 7l11 10M28 7L17 17" /></svg></TrayButton>
          <TrayButton $w={90} aria-label="Keyboard"><svg width="46" height="26" viewBox="0 0 46 26" fill="none" stroke="#fff" strokeWidth="2"><path d="M1 1h44v24H1z" /><path d="M6 7.500h35M6 13h35" strokeDasharray="2 2" /><path d="M6 19h6M14 19h18M34 19h7" /></svg></TrayButton>
          <Clock>9:18 AM<br />8/24/2018</Clock>
          <TrayButton $w={92} aria-label="Notifications"><svg width="32" height="32" viewBox="0 0 32 32" fill="none" stroke="#fff" strokeWidth="2"><path d="M1 1h30v24H21l-5 6-5-6H1z" /></svg></TrayButton>
          <ShowDesktop aria-label="Show desktop" />
        </Tray>
      </Taskbar>
    </Screen>
  );
}
